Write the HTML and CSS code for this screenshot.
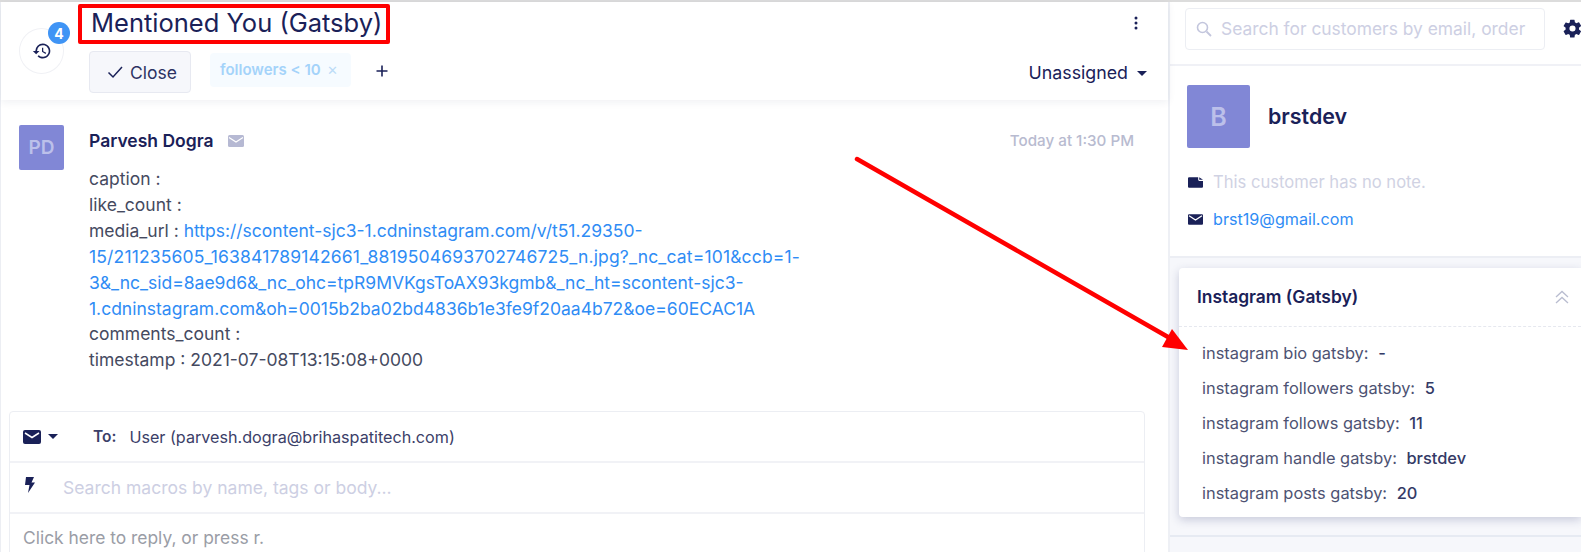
FILE: index.html
```html
<!DOCTYPE html>
<html lang="en">
<head>
<meta charset="utf-8">
<title>Mentioned You (Gatsby)</title>
<link rel="stylesheet" href="styles.css">
</head>
<body>
<div class="app">
  <main class="main">
    <header class="head">
      <div class="history">
        <svg class="history-icon" viewBox="0 0 24 24" width="20" height="20"><path fill="#1a2158" d="M13 3a9 9 0 0 0-9 9H1l3.9 3.9.1.1L9 12H6a7 7 0 1 1 2.05 4.95l-1.42 1.42A9 9 0 1 0 13 3zm-1 5v5l4.25 2.52.77-1.28-3.52-2.09V8z"/></svg>
        <span class="badge">4</span>
      </div>
      <div class="head-body">
        <h1 class="title">Mentioned You (Gatsby)</h1>
        <div class="actions">
          <button class="close-btn">
            <svg viewBox="0 0 16 16" width="16" height="16"><path fill="none" stroke="#1a2158" stroke-width="1.5" d="M1.5 8.5l4.500 4.500 9-10"/></svg>
            Close
          </button>
          <span class="tag">followers &lt; 10 <span class="tag-x">✕</span></span>
          <svg class="plus" viewBox="0 0 12 12" width="12" height="12"><path stroke="#1a2158" stroke-width="1.600" d="M6 0.500v11M0.500 6h11"/></svg>
        </div>
      </div>
      <div class="head-right">
        <svg class="dots" viewBox="0 0 4 16" width="4" height="16"><circle cx="2" cy="3" r="1.500" fill="#1a2158"/><circle cx="2" cy="8" r="1.500" fill="#1a2158"/><circle cx="2" cy="13" r="1.500" fill="#1a2158"/></svg>
        <div class="assignee">Unassigned <span class="caret"></span></div>
      </div>
    </header>

    <section class="message">
      <div class="avatar avatar-sm">PD</div>
      <div class="msg-body">
        <div class="msg-top">
          <span class="author">Parvesh Dogra</span>
          <svg class="mail-grey" viewBox="0 0 16 12" width="16" height="12"><rect width="16" height="12" rx="1.500" fill="#b6b9d3"/><path fill="none" stroke="#fff" stroke-width="1.300" d="M1 2.500l7 4.500 7-4.500"/></svg>
          <span class="time">Today at 1:30 PM</span>
        </div>
        <p class="msg-text">caption :<br>like_count :<br>media_url : <a class="link" href="#">https://scontent-sjc3-1.cdninstagram.com/v/t51.29350-<br><span class="digits">15/211235605_163841789142661_8819504693702746725_n.jpg?_nc_cat=101&amp;ccb=1-</span><br>3&amp;_nc_sid=8ae9d6&amp;_nc_ohc=tpR9MVKgsToAX93kgmb&amp;_nc_ht=scontent-sjc3-<br>1.cdninstagram.com&amp;oh=0015b2ba02bd4836b1e3fe9f20aa4b72&amp;oe=60ECAC1A</a><br>comments_count :<br>timestamp : 2021-07-08T13:15:08+0000</p>
      </div>
    </section>

    <section class="composer">
      <div class="comp-row comp-to">
        <svg viewBox="0 0 18 14" width="18" height="14"><rect width="18" height="14" rx="2" fill="#1a2158"/><path fill="none" stroke="#fff" stroke-width="1.500" d="M2 3l7 4.500L16 3"/></svg>
        <span class="caret caret-sm"></span>
        <span class="to-label">To:</span>
        <span class="to-value">User (parvesh.dogra@brihaspatitech.com)</span>
      </div>
      <div class="comp-row comp-macro">
        <svg viewBox="0 0 10 16" width="10" height="16"><path fill="#1a2158" d="M1 0h8L6.500 5.500H10L3 16l1.500-8H0z"/></svg>
        <span class="macro-text">Search macros by name, tags or body...</span>
      </div>
      <div class="comp-row comp-reply">Click here to reply, or press r.</div>
    </section>
  </main>

  <aside class="side">
    <div class="search-row">
      <div class="search">
        <svg viewBox="0 0 16 16" width="16" height="16"><circle cx="6.500" cy="6.500" r="5" fill="none" stroke="#c3c6dd" stroke-width="1.600"/><path stroke="#c3c6dd" stroke-width="1.800" d="M10.500 10.500l4.500 4.500"/></svg>
        <span class="search-text">Search for customers by email, order</span>
      </div>
      <svg class="gear" viewBox="0 0 24 24" width="21" height="21"><path fill="#1a2158" d="M19.400 13c.04-.32.06-.66.06-1s-.02-.68-.07-1l2.160-1.680a.5.5 0 0 0 .12-.64l-2.050-3.550a.5.5 0 0 0-.62-.22l-2.550 1.020a7.500 7.500 0 0 0-1.730-1l-.38-2.700A.5.5 0 0 0 13.840 2H9.750a.5.5 0 0 0-.5.42l-.38 2.710a7.900 7.900 0 0 0-1.730 1L4.600 5.100a.5.5 0 0 0-.62.22L1.930 8.870a.5.5 0 0 0 .12.64L4.200 11.200c-.05.32-.08.66-.08 1s.02.68.07 1l-2.160 1.680a.5.5 0 0 0-.12.64l2.050 3.550c.13.22.39.3.62.22l2.550-1.020c.53.41 1.110.75 1.730 1l.38 2.700c.05.24.25.42.5.42h4.090a.5.5 0 0 0 .5-.42l.38-2.710a7.900 7.900 0 0 0 1.730-1l2.550 1.030c.23.08.49 0 .62-.22l2.050-3.550a.5.5 0 0 0-.12-.64zM12 15.500a3.500 3.500 0 1 1 0-7 3.500 3.500 0 0 1 0 7z"/></svg>
    </div>
    <div class="profile">
      <div class="profile-top">
        <div class="avatar avatar-lg">B</div>
        <span class="profile-name">brstdev</span>
      </div>
      <div class="info-row">
        <svg viewBox="0 0 14 10" width="15" height="11"><path fill="#1a2158" d="M1 0h8.500v2.500a1 1 0 0 0 1 1H14v5.500a1 1 0 0 1-1 1H1a1 1 0 0 1-1-1V1a1 1 0 0 1 1-1zM10.500 0L14 2.500h-3.500z"/></svg>
        <span class="note">This customer has no note.</span>
      </div>
      <div class="info-row info-email">
        <svg viewBox="0 0 14 10" width="15" height="11"><rect width="14" height="10" rx="1" fill="#1a2158"/><path fill="none" stroke="#fff" stroke-width="1.200" d="M1 1.500L7 5.500l6-4"/></svg>
        <a class="link email" href="#">brst19@gmail.com</a>
      </div>
    </div>
    <div class="card-zone">
      <div class="card">
        <div class="card-head">
          <span class="card-title">Instagram (Gatsby)</span>
          <svg viewBox="0 0 14 14" width="14" height="14"><path fill="none" stroke="#b9bdd0" stroke-width="1.300" d="M1 7l6-5.500L13 7M1 13l6-5.500L13 13"/></svg>
        </div>
        <ul class="attrs">
          <li>instagram bio gatsby: <b>-</b></li>
          <li>instagram followers gatsby: <b>5</b></li>
          <li>instagram follows gatsby: <b>11</b></li>
          <li>instagram handle gatsby: <b>brstdev</b></li>
          <li>instagram posts gatsby: <b>20</b></li>
        </ul>
      </div>
    </div>
    <div class="side-foot"></div>
  </aside>
</div>
<div class="red-box"></div>
<svg class="red-arrow" viewBox="0 0 1581 552" width="1581" height="552"><line x1="857" y1="159" x2="1168" y2="337" stroke="#ff0000" stroke-width="4.500" stroke-linecap="round"/><polygon points="1188,350 1162,347 1172,329" fill="#ff0000"/></svg>
</body>
</html>
```
FILE: styles.css
```css
* { box-sizing: border-box; }
html, body { margin: 0; height: 552px; overflow: hidden; background: #fff; }
body { font-family: Inter, "Liberation Sans", sans-serif; color: #1a2158; position: relative; }
.app { display: flex; width: 1581px; height: 552px; border-top: 2px solid #dcdcdc; }
.main { width: 1170px; border-left: 1px solid #eceef3; border-right: 2px solid #eef0f5; display: flex; flex-direction: column; flex: none; }
.head { display: flex; height: 98px; padding: 0 18px 0 18px; box-shadow: 0 2px 8px rgba(30,40,90,.07); position: relative; flex: none; }
.history { position: relative; width: 45px; height: 46px; margin-top: 26px; border: 1px solid #f0f1f5; border-radius: 50%; display: flex; align-items: center; justify-content: center; flex: none; }
.badge { position: absolute; top: -7px; right: -7px; width: 22px; height: 22px; border-radius: 50%; background: #3f94f5; color: #fff; font-size: 14px; font-weight: 700; display: flex; align-items: center; justify-content: center; }
.head-body { margin-left: 25px; flex: 1; }
.title { margin: 3px 0 0 2px; font-size: 25.5px; line-height: 36px; font-weight: 400; color: #1a2158; white-space: nowrap; }
.actions { display: flex; align-items: center; margin-top: 10px; }
.close-btn { display: flex; align-items: center; gap: 7px; width: 102px; height: 42px; padding: 0 0 0 17px; background: #f6f7fb; border: 1px solid #e7e9f1; border-radius: 4px; font: 400 17.5px Inter, sans-serif; color: #2d3363; }
.tag { margin-left: 19px; height: 34px; width: 141px; margin-top: -5px; padding: 0 10px; background: #f6fbff; border-radius: 4px; color: #a4d3fa; font-size: 15px; font-weight: 600; display: flex; align-items: center; gap: 6px; white-space: nowrap; }
.tag-x { font-size: 13px; font-weight: 400; color: #bcdcf7; }
.plus { margin-left: 25px; margin-top: -3px; }
.head-right { display: flex; flex-direction: column; align-items: flex-end; width: 140px; }
.dots { margin: 13px 12px 0 0; }
.assignee { margin-top: 29px; display: flex; align-items: center; gap: 9px; font-size: 17.8px; line-height: 26px; margin-right: 3px; white-space: nowrap; }
.caret { width: 0; height: 0; border-left: 5px solid transparent; border-right: 5px solid transparent; border-top: 5px solid #1a2158; display: inline-block; flex: none; }
.message { display: flex; padding: 25px 0 0 18px; flex: none; }
.avatar { background: #8187d6; color: #bcc0ea; border-radius: 2px; display: flex; align-items: center; justify-content: center; font-weight: 600; flex: none; }
.avatar-sm { width: 45px; height: 45px; font-size: 19px; }
.msg-body { margin-left: 25px; width: 1045px; }
.msg-top { display: flex; align-items: center; height: 31px; }
.author { font-size: 17.5px; font-weight: 600; line-height: 31px; }
.mail-grey { margin-left: 14px; }
.time { margin-left: auto; font-size: 15.2px; font-weight: 500; color: #b8bbd0; }
.msg-text { margin: 10px 0 0; font-size: 17.5px; line-height: 25.9px; color: #454a5f; white-space: nowrap; }
.digits { letter-spacing: .16px; }
.link { color: #2f8cf5; text-decoration: none; }
.composer { margin: 38px 0 0 8px; width: 1136px; border: 1px solid #eceef3; border-radius: 4px 4px 0 0; flex: 1; }
.comp-row { display: flex; align-items: center; height: 51px; border-bottom: 2px solid #f1f2f6; padding-left: 13px; }
.caret-sm { margin-left: 7px; }
.to-label { margin-left: 35px; font-size: 15.5px; font-weight: 600; color: #3b4068; }
.to-value { margin-left: 13px; font-size: 16.15px; color: #3b4068; white-space: nowrap; }
.macro-text { margin-left: 28px; font-size: 17.5px; color: #cdcfe3; white-space: nowrap; }
.comp-macro svg { margin-left: 2px; margin-top: -6px; }
.comp-reply { border-bottom: 0; font-size: 17.4px; color: #9a9da6; height: 46px; }
.side { flex: 1; display: flex; flex-direction: column; min-width: 0; }
.search-row { display: flex; align-items: center; height: 64px; padding-left: 15px; border-bottom: 2px solid #f0f1f6; flex: none; }
.search { display: flex; align-items: center; width: 360px; height: 42px; margin-top: -8px; border: 1px solid #eceef3; border-radius: 4px; padding-left: 10px; flex: none; }
.search-text { margin-left: 9px; font-size: 17.4px; color: #cdcfe3; white-space: nowrap; margin-top: -2px; }
.gear { margin-left: 17px; margin-top: -9px; flex: none; }
.profile { padding: 19px 0 0 17px; height: 190px; flex: none; }
.profile-top { display: flex; align-items: center; }
.avatar-lg { width: 63px; height: 63px; font-size: 25px; }
.profile-name { margin-left: 18px; font-size: 21.4px; font-weight: 600; margin-top: -2px; }
.info-row { display: flex; align-items: center; gap: 10px; font-size: 16.6px; margin-top: 24px; height: 20px; padding-left: 1px; }
.info-email { margin-top: 17px; font-size: 16.15px; }
.note { color: #d0d2e3; white-space: nowrap; }
.card-zone { background: #f6f7fb; padding: 10px 0 18px 9px; border-top: 2px solid #eceef4; border-bottom: 2px solid #e6eaf2; flex: none; }
.card { background: #fff; border-radius: 4px 0 0 4px; box-shadow: 0 3px 10px rgba(40,50,110,.22); height: 249px; }
.card-head { display: flex; align-items: center; justify-content: space-between; height: 59px; padding: 0 12px 0 18px; border-bottom: 1px dashed #e6e8ef; }
.card-title { font-size: 17.4px; font-weight: 600; margin-top: -2px; }
.attrs { list-style: none; margin: 9px 0 0; padding: 0 0 0 23px; font-size: 16.4px; color: #4d5272; }
.attrs li { height: 35px; line-height: 35.2px; white-space: nowrap; }
.attrs b { font-weight: 500; color: #343a66; margin-left: 5px; }
.side-foot { flex: 1; background: #f6f7fb; }
.red-box { position: absolute; left: 78px; top: 4px; width: 312px; height: 40px; border: 4px solid #ff0000; border-radius: 2px; }
.red-arrow { position: absolute; left: 0; top: 0; pointer-events: none; }
```
